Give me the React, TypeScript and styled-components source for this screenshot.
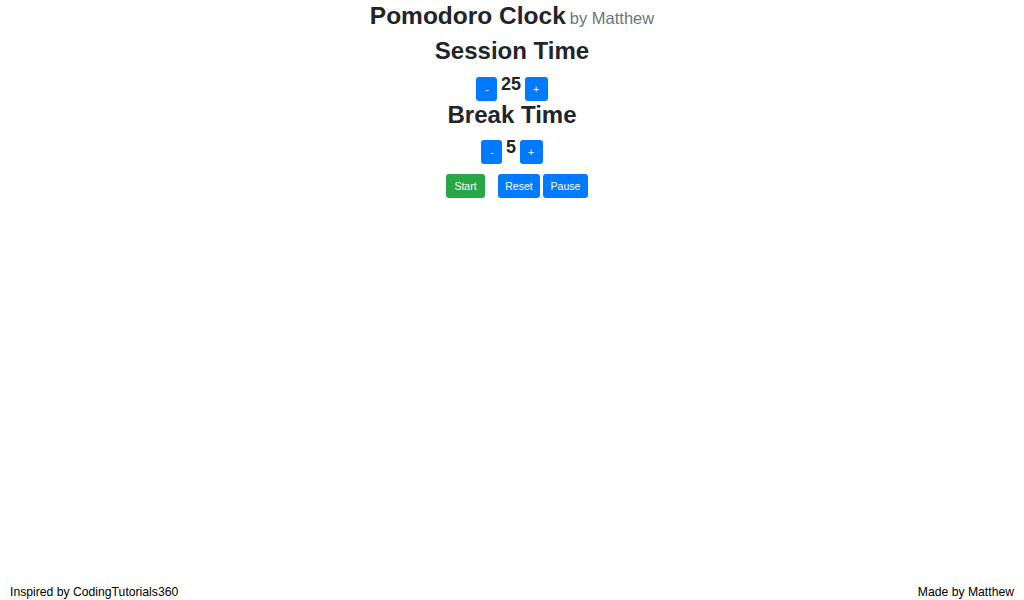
import React, { useState } from "react";
import styled, { createGlobalStyle } from "styled-components";

const Global = createGlobalStyle`
  html, body { margin: 0; padding: 0; }
  body {
    font-family: "Liberation Sans", Arial, Helvetica, sans-serif;
    color: #212529;
    background: #fff;
  }
  * { box-sizing: border-box; }
`;

const Page = styled.div`
  min-height: 100vh;
  display: flex;
  flex-direction: column;
`;

const Main = styled.main`
  display: flex;
  flex-direction: column;
  align-items: center;
  padding-top: 2px;
`;

const Title = styled.h1`
  margin: 0;
  font-size: 24.5px;
  line-height: 28.8px;
  font-weight: 700;
  color: #212529;
`;

const Byline = styled.small`
  font-size: 16.5px;
  font-weight: 400;
  color: #6c757d;
  margin-left: 4px;
`;

const Heading = styled.h2<{ $top: number }>`
  margin: ${(p) => p.$top}px 0 11px;
  font-size: 24px;
  line-height: 28.8px;
  font-weight: 700;
  color: #212529;
`;

const Stepper = styled.div`
  display: flex;
  align-items: flex-start;
  gap: 3.5px;
  height: 24px;
`;

const Value = styled.span`
  font-size: 18px;
  line-height: 15.5px;
  font-weight: 700;
  color: #212529;
`;

const Btn = styled.button<{ $variant?: "primary" | "success"; $w: number }>`
  width: ${(p) => p.$w}px;
  height: 24px;
  padding: 0;
  border: none;
  border-radius: 3px;
  background: ${(p) => (p.$variant === "success" ? "#28a745" : "#007bff")};
  color: #fff;
  font-family: "Liberation Sans", Arial, sans-serif;
  font-size: 10.5px;
  font-weight: 400;
  line-height: 24px;
  text-align: center;
  cursor: pointer;
`;

const Controls = styled.div`
  display: flex;
  gap: 3px;
  margin-top: 10px;
  padding-left: 10px;
`;

const StartBtn = styled(Btn)`
  margin-right: 10px;
`;

const Footer = styled.footer`
  margin-top: auto;
  display: flex;
  justify-content: space-between;
  padding: 0 10px 1px;
  font-size: 12.2px;
  line-height: 14px;
  color: #000;
`;

export default function App() {
  const [session, setSession] = useState(25);
  const [brk, setBrk] = useState(5);
  return (
    <Page>
      <Global />
      <Main>
        <Title>
          Pomodoro Clock<Byline>by Matthew</Byline>
        </Title>
        <Heading $top={4}>Session Time</Heading>
        <Stepper>
          <Btn $w={21} onClick={() => setSession((s) => Math.max(1, s - 1))}>-</Btn>
          <Value>{session}</Value>
          <Btn $w={23} onClick={() => setSession((s) => s + 1)}>+</Btn>
        </Stepper>
        <Heading $top={0}>Break Time</Heading>
        <Stepper>
          <Btn $w={21} onClick={() => setBrk((s) => Math.max(1, s - 1))}>-</Btn>
          <Value>{brk}</Value>
          <Btn $w={23} onClick={() => setBrk((s) => s + 1)}>+</Btn>
        </Stepper>
        <Controls>
          <StartBtn $variant="success" $w={39}>Start</StartBtn>
          <Btn $w={42}>Reset</Btn>
          <Btn $w={45}>Pause</Btn>
        </Controls>
      </Main>
      <Footer>
        <span>Inspired by CodingTutorials360</span>
        <span>Made by Matthew</span>
      </Footer>
    </Page>
  );
}
